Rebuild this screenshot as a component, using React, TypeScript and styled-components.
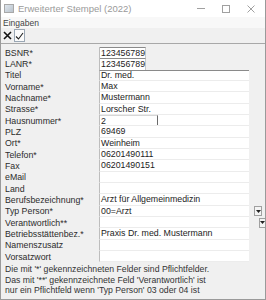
import React from "react";
import styled, { createGlobalStyle } from "styled-components";

const Global = createGlobalStyle`
  html, body { margin: 0; padding: 0; background: #ffffff; }
  body { font-family: "Liberation Sans", Arial, sans-serif; }
`;

const Window = styled.div`
  width: 266px;
  height: 300px;
  box-sizing: border-box;
  border: 1px solid #9a9a9a;
  border-top: none;
  background: #f0f0f0;
  display: flex;
  flex-direction: column;
  overflow: hidden;
  font-size: 9px;
  color: #2a2a2a;
`;

const TitleBar = styled.div`
  height: 17px;
  background: #ffffff;
  display: flex;
  align-items: center;
  padding-left: 3px;
  gap: 4px;
  color: #9a9a9a;
  font-size: 9.5px;
`;

const AppIcon = styled.div`
  width: 8px;
  height: 7px;
  border: 1px solid #a8a8a8;
  background: linear-gradient(135deg, #dfe6ee, #b9c3cc);
`;

const TitleText = styled.span`
  flex: 1;
`;

const Controls = styled.div`
  display: flex;
  height: 100%;
  padding-right: 2px;
`;

const Ctl = styled.div`
  width: 25px;
  display: flex;
  align-items: center;
  justify-content: center;
`;

const MenuBar = styled.div`
  height: 11px;
  background: #f8f8f8;
  display: flex;
  align-items: center;
  padding-left: 2px;
  color: #444;
  font-size: 8.5px;
`;

const Toolbar = styled.div`
  height: 15px;
  display: flex;
  align-items: center;
  gap: 1px;
  padding-left: 1px;
  border-bottom: 1px solid #a8a8a8;
`;

const ToolButton = styled.div<{ $framed?: boolean }>`
  width: 11px;
  height: 13px;
  box-sizing: border-box;
  display: flex;
  align-items: center;
  justify-content: center;
  border: 1px solid ${(p) => (p.$framed ? "#9aa7b4" : "transparent")};
  background: ${(p) => (p.$framed ? "#fbfbfb" : "transparent")};
`;

const Grid = styled.div`
  margin-top: 3px;
  display: grid;
  grid-template-columns: 98px 150px 16px;
  grid-template-rows: repeat(19, 11.33px);
`;

const Label = styled.div`
  display: flex;
  align-items: center;
  padding-left: 4px;
  color: #2c2c2c;
  white-space: nowrap;
  font-size: 8.8px;
`;

const Value = styled.div<{ $plain?: boolean; $first?: boolean }>`
  display: flex;
  align-items: stretch;
  box-sizing: border-box;
  background: ${(p) => (p.$plain ? "transparent" : "#ffffff")};
  border-left: 1px solid #bdbdbd;
  border-bottom: ${(p) => (p.$plain ? "none" : "1px solid #ececec")};
  border-top: ${(p) => (p.$first ? "1px solid #8a8a8a" : "none")};
  font-size: 8.8px;
  color: #1c1c1c;
  white-space: nowrap;
  overflow: hidden;
`;

const Text = styled.span`
  display: flex;
  align-items: center;
  padding-left: 1px;
`;

const Box = styled.div<{ $w: number; $edge?: boolean }>`
  width: ${(p) => p.$w}px;
  box-sizing: border-box;
  background: #ffffff;
  display: flex;
  align-items: center;
  padding-left: 1px;
  border-top: 1px solid ${(p) => (p.$edge ? "#d6d6d6" : "#8a8a8a")};
  border-right: 1px solid ${(p) => (p.$edge ? "#6a6a6a" : "#c8c8c8")};
`;

const Side = styled.div<{ $offset: number }>`
  display: flex;
  align-items: center;
  padding-left: ${(p) => p.$offset}px;
`;

const Drop = styled.div`
  width: 8px;
  height: 10px;
  box-sizing: border-box;
  border: 1px solid #a0a0a0;
  background: #f4f4f4;
  display: flex;
  align-items: center;
  justify-content: center;
`;

const Notes = styled.div`
  margin-top: 2px;
  padding-left: 4px;
  display: flex;
  flex-direction: column;
  line-height: 10.5px;
  font-size: 8.7px;
  color: #333;
  white-space: nowrap;
`;

type Row = {
  label: string;
  value?: string;
  kind?: "small" | "num" | "drop";
  drop?: number;
};

const rows: Row[] = [
  { label: "BSNR*", value: "123456789", kind: "small" },
  { label: "LANR*", value: "123456789", kind: "small" },
  { label: "Titel", value: "Dr. med." },
  { label: "Vorname*", value: "Max" },
  { label: "Nachname*", value: "Mustermann" },
  { label: "Strasse*", value: "Lorscher Str." },
  { label: "Hausnummer*", value: "2", kind: "num" },
  { label: "PLZ", value: "69469" },
  { label: "Ort*", value: "Weinheim" },
  { label: "Telefon*", value: "06201490111" },
  { label: "Fax", value: "06201490151" },
  { label: "eMail" },
  { label: "Land" },
  { label: "Berufsbezeichnung*", value: "Arzt für Allgemeinmedizin" },
  { label: "Typ Person*", value: "00=Arzt", kind: "drop", drop: 5 },
  { label: "Verantwortlich**", kind: "drop", drop: 10 },
  { label: "Betriebsstättenbez.*", value: "Praxis Dr. med. Mustermann" },
  { label: "Namenszusatz" },
  { label: "Vorsatzwort" },
];

const Arrow = () => (
  <svg width="5" height="3" viewBox="0 0 5 3">
    <path d="M0 0h5L2.5 3z" fill="#222" />
  </svg>
);

export default function App() {
  return (
    <>
      <Global />
      <Window>
        <TitleBar>
          <AppIcon />
          <TitleText>Erweiterter Stempel (2022)</TitleText>
          <Controls>
            <Ctl>
              <svg width="8" height="1"><rect width="8" height="1" fill="#a0a0a0" /></svg>
            </Ctl>
            <Ctl>
              <svg width="8" height="8"><rect x="0.5" y="0.5" width="7" height="7" fill="none" stroke="#a0a0a0" /></svg>
            </Ctl>
            <Ctl>
              <svg width="8" height="8"><path d="M0.5 0.5l7 7M7.5 0.5l-7 7" stroke="#a0a0a0" /></svg>
            </Ctl>
          </Controls>
        </TitleBar>
        <MenuBar>Eingaben</MenuBar>
        <Toolbar>
          <ToolButton>
            <svg width="9" height="9" viewBox="0 0 9 9">
              <path d="M1 1l7 7M8 1l-7 7" stroke="#111" strokeWidth="1.6" />
            </svg>
          </ToolButton>
          <ToolButton $framed>
            <svg width="9" height="8" viewBox="0 0 9 8">
              <path d="M1 4.5l2.5 2.5L8 1" stroke="#222" strokeWidth="1.1" fill="none" />
            </svg>
          </ToolButton>
        </Toolbar>
        <Grid>
          {rows.map((r, i) => (
            <React.Fragment key={r.label}>
              <Label>{r.label}</Label>
              {r.kind === "small" ? (
                <Value $plain>
                  <Box $w={46}>{r.value}</Box>
                </Value>
              ) : r.kind === "num" ? (
                <Value>
                  <Box $w={58} $edge>
                    {r.value}
                  </Box>
                </Value>
              ) : (
                <Value $first={i === 2}>
                  <Text>{r.value}</Text>
                </Value>
              )}
              <Side $offset={r.drop ?? 0}>
                {r.kind === "drop" && (
                  <Drop>
                    <Arrow />
                  </Drop>
                )}
              </Side>
            </React.Fragment>
          ))}
        </Grid>
        <Notes>
          <span>Die mit '*' gekennzeichneten Felder sind Pflichtfelder.</span>
          <span>Das mit '**' gekennzeichnete Feld 'Verantwortlich' ist</span>
          <span>nur ein Pflichtfeld wenn 'Typ Person' 03 oder 04 ist</span>
        </Notes>
      </Window>
    </>
  );
}
